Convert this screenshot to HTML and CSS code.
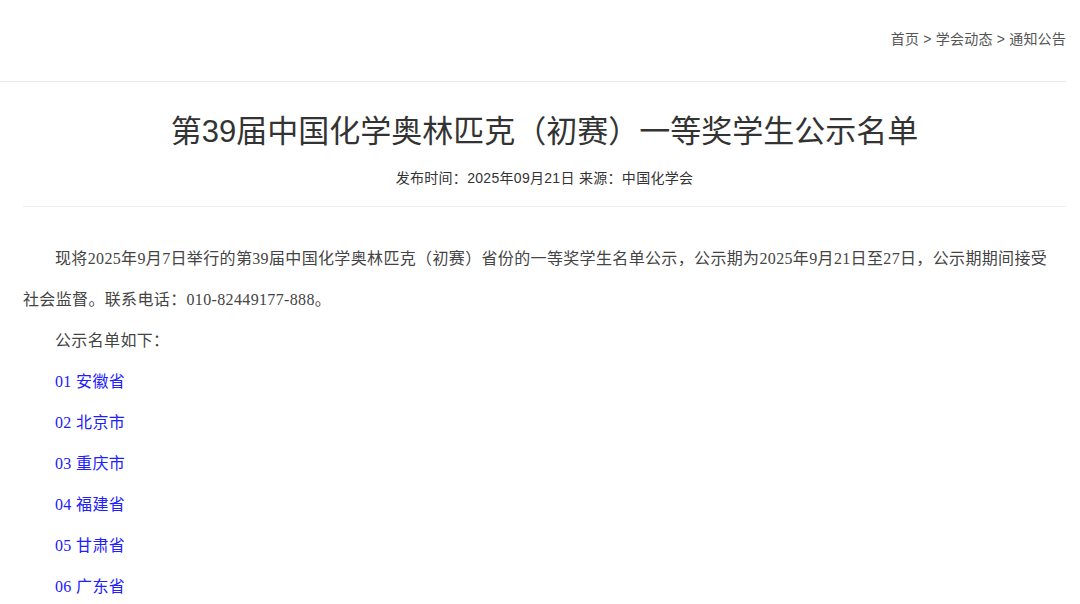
FILE: index.html
```html
<!DOCTYPE html>
<html lang="zh-CN">
<head>
<meta charset="utf-8">
<title>第39届中国化学奥林匹克（初赛）一等奖学生公示名单</title>
<link rel="stylesheet" href="styles.css">
</head>
<body>
<div class="page">
  <header class="topbar">
    <nav class="crumbs"><a href="#">首页</a> &gt; <a href="#">学会动态</a> &gt; <a href="#">通知公告</a></nav>
  </header>
  <article class="article">
    <div class="article-head">
      <h1 class="title">第39届中国化学奥林匹克（初赛）一等奖学生公示名单</h1>
      <div class="meta">发布时间：2025年09月21日 来源：中国化学会</div>
    </div>
    <div class="article-body">
      <p class="para">现将2025年9月7日举行的第39届中国化学奥林匹克（初赛）省份的一等奖学生名单公示，公示期为2025年9月21日至27日，公示期期间接受社会监督。联系电话：010-82449177-888。</p>
      <p class="para">公示名单如下：</p>
      <p class="para"><a class="link" href="#">01 安徽省</a></p>
      <p class="para"><a class="link" href="#">02 北京市</a></p>
      <p class="para"><a class="link" href="#">03 重庆市</a></p>
      <p class="para"><a class="link" href="#">04 福建省</a></p>
      <p class="para"><a class="link" href="#">05 甘肃省</a></p>
      <p class="para"><a class="link" href="#">06 广东省</a></p>
    </div>
  </article>
</div>
</body>
</html>
```

FILE: styles.css
```css
html, body {
  margin: 0;
  padding: 0;
  background: #ffffff;
}

body {
  font-family: "Liberation Sans", "Noto Sans CJK SC", sans-serif;
  color: #333333;
}

.page {
  width: 1066px;
}

.topbar {
  box-sizing: border-box;
  height: 82px;
  padding-top: 28px;
  border-bottom: 1px solid #e9e9e9;
}

.crumbs {
  text-align: right;
  font-size: 14px;
  letter-spacing: 0.2px;
  line-height: 22px;
  color: #555555;
}

.crumbs a {
  color: #555555;
  text-decoration: none;
}

.article {
  margin-left: 23px;
}

.article-head {
  padding-top: 30px;
  padding-bottom: 17px;
  border-bottom: 1px solid #eeeeee;
  text-align: center;
}

.title {
  margin: 0;
  font-size: 31px;
  line-height: 40px;
  font-weight: normal;
  color: #333333;
}

.meta {
  margin-top: 15px;
  font-size: 14px;
  letter-spacing: 0.3px;
  line-height: 22px;
  color: #333333;
}

.article-body {
  padding-top: 31px;
  padding-right: 12px;
  font-family: "Liberation Serif", "Noto Sans CJK SC", serif;
  font-size: 16px;
  letter-spacing: 0.35px;
}

.para {
  margin: 0;
  line-height: 41px;
  text-indent: 2em;
  color: #444444;
}

.link {
  color: #2020ff;
  text-decoration: none;
}
```
